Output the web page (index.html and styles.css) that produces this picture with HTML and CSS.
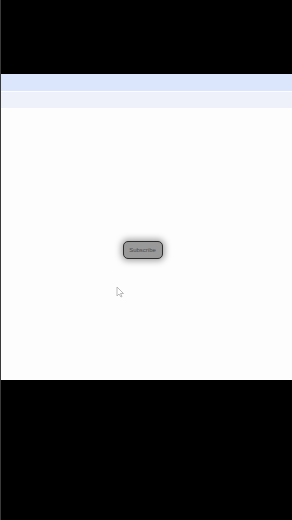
FILE: index.html
```html
<!DOCTYPE html>
<html>
<head>
    <title>Subscribe</title>
    <link rel="stylesheet" href="styles.css">
</head>
<body>
    <div class="letterbox top"></div>
    <div class="frame">
        <div class="band band-main"></div>
        <div class="band-gap"></div>
        <div class="band band-sub"></div>
        <div class="stage">
            <button class="subscribe">Subscribe</button>
            <svg class="cursor" width="9" height="12" viewBox="0 0 9 12">
                <path d="M1 1 L1 10 L3 8 L5 11 L6 10.5 L4.5 7.5 L7.5 7.5 Z" fill="#fff" stroke="#aaa" stroke-width="0.8"/>
            </svg>
        </div>
    </div>
    <div class="letterbox bottom"></div>
</body>
</html>
```

FILE: styles.css
```css
body {
    background-color: #000;
    font-family: "Liberation Sans", Arial, sans-serif;
    margin: 0;
    padding: 0;
    width: 292px;
    height: 520px;
    overflow: hidden;
    border-left: 1px solid #3a3a3a;
    box-sizing: border-box;
}

.letterbox.top {
    height: 74px;
}

.letterbox.bottom {
    height: 140px;
}

.frame {
    height: 306px;
    background-color: #fdfdfd;
    display: flex;
    flex-direction: column;
}

.band-main {
    height: 17px;
    background-color: #dbe5fb;
}

.band-gap {
    height: 1px;
    background-color: #fbfcff;
}

.band-sub {
    height: 16px;
    background-color: #eef1fa;
}

.stage {
    flex: 1;
    position: relative;
    padding-top: 133px;
    display: flex;
    justify-content: center;
    padding-right: 8px;
}

.subscribe {
    width: 40px;
    height: 18px;
    padding: 0;
    background-color: #999;
    border: 1px solid #2e2e2e;
    border-radius: 5px;
    box-shadow: 0 0 6px 2px rgba(0, 0, 0, 0.35);
    color: #4a4a4a;
    font-family: "Liberation Sans", Arial, sans-serif;
    font-size: 6px;
}

.cursor {
    position: absolute;
    left: 115px;
    top: 178px;
}
```
